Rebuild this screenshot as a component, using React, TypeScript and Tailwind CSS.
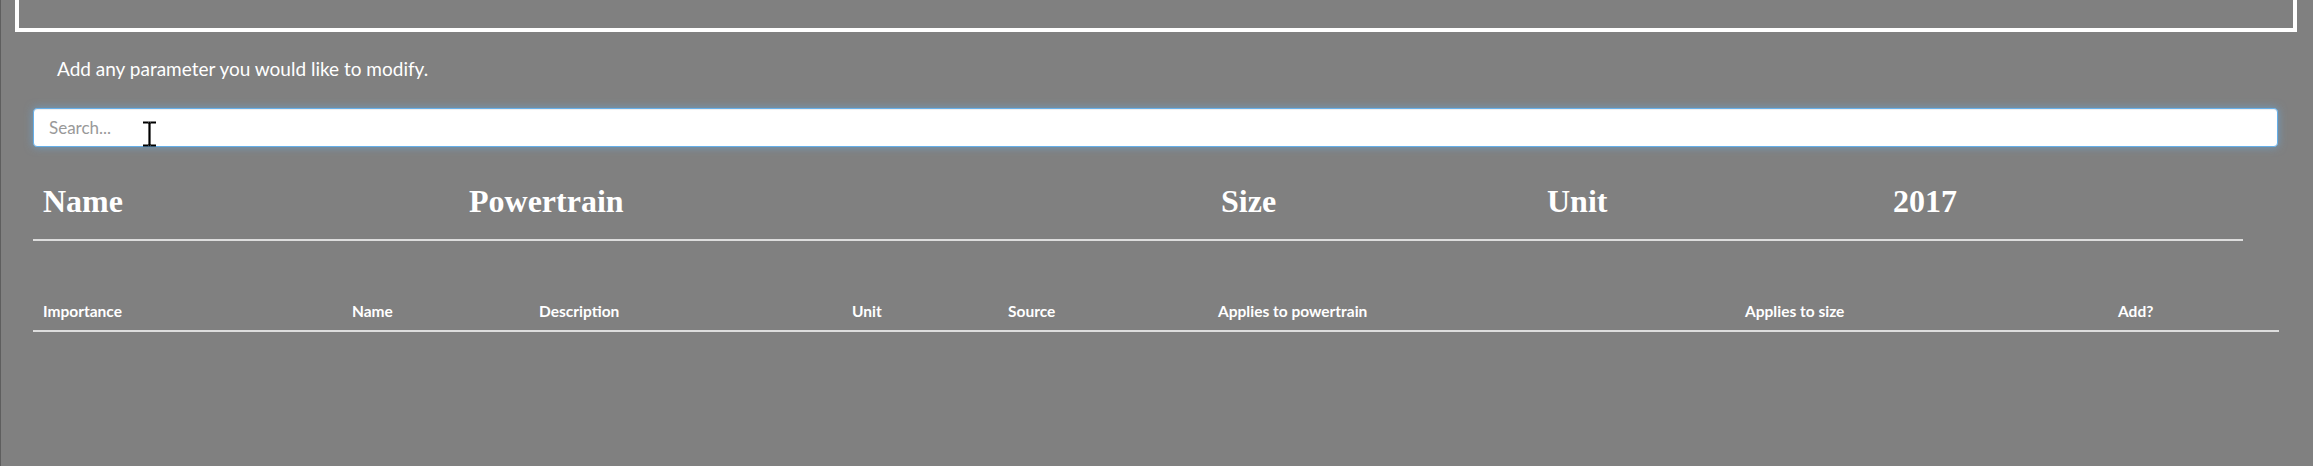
import React from "react";

export default function App() {
  const h1 = ["Name", "Powertrain", "Size", "Unit", "2017"];
  const h2 = [
    "Importance",
    "Name",
    "Description",
    "Unit",
    "Source",
    "Applies to powertrain",
    "Applies to size",
    "Add?",
  ];
  return (
    <div
      className="w-[2313px] h-[466px] overflow-hidden bg-[#808080] border-l border-[#5e5e5e] flex flex-col"
      style={{ fontFamily: "Lato, 'Noto Sans', sans-serif" }}
    >
      <div className="ml-[14px] w-[2282px] h-[32px] shrink-0 border-x-4 border-b-4 border-white" />
      <p className="ml-[56px] mt-[24px] text-[19px] leading-[26px] text-white">
        Add any parameter you would like to modify.
      </p>
      <div className="relative ml-[32px] mt-[26px] w-[2245px]">
        <input
          className="w-full h-[39px] rounded-[4px] bg-white border border-[#66afe9] pl-[15px] text-[17px] text-[#555] placeholder:text-[#999] outline-none shadow-[inset_0_1px_1px_rgba(0,0,0,0.075),0_0_8px_rgba(102,175,233,0.6)]"
          style={{ fontFamily: "Lato, sans-serif" }}
          placeholder="Search..."
        />
        <svg
          className="absolute left-[109px] top-[13px] pointer-events-none"
          width="15"
          height="26"
          viewBox="0 0 15 26"
        >
          <path d="M1 1.5h5.5M8.5 1.5H14M7.5 2v22M1 24.5h5.5M8.5 24.5H14" stroke="#000" strokeWidth="2.2" fill="none" />
          <path d="M6.5 1.5h2M6.5 24.5h2" stroke="#000" strokeWidth="2.2" />
        </svg>
      </div>
      <div className="ml-[32px] mt-[36px] w-[2210px] grid grid-cols-[426px_752px_326px_346px_360px] border-b-2 border-[#dddddd]">
        {h1.map((t) => (
          <div
            key={t}
            className="pl-[10px] pb-[20px] text-[32px] leading-[36px] font-bold text-white"
            style={{ fontFamily: "'Liberation Serif', 'Times New Roman', serif" }}
          >
            {t}
          </div>
        ))}
      </div>
      <div className="ml-[32px] mt-[52px] w-[2246px] grid grid-cols-[309px_187px_313px_156px_210px_527px_373px_171px] border-b-2 border-[#dddddd]">
        {h2.map((t) => (
          <div
            key={t}
            className="pl-[10px] pt-[8px] pb-[9px] text-[15.5px] leading-[20px] font-bold text-white"
          >
            {t}
          </div>
        ))}
      </div>
    </div>
  );
}
